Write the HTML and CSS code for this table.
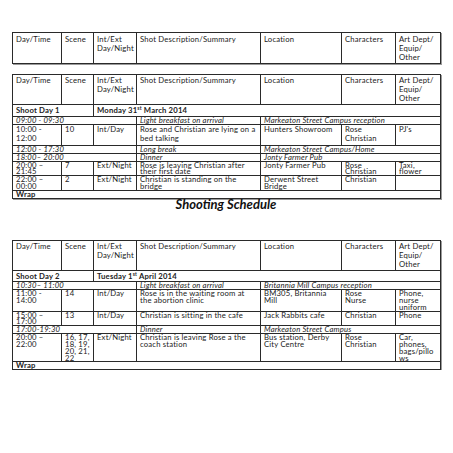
FILE: index.html
```html
<!DOCTYPE html>
<html>
<head>
<meta charset="utf-8">
<link rel="stylesheet" href="styles.css">
</head>
<body>
<div class="page">
  <table class="sched first">
    <colgroup><col class="c1"><col class="c2"><col class="c3"><col class="c4"><col class="c5"><col class="c6"><col class="c7"></colgroup>
    <tr class="head"><td>Day/Time</td><td>Scene</td><td>Int/Ext<br>Day/Night</td><td>Shot Description/Summary</td><td>Location</td><td>Characters</td><td>Art Dept/<br>Equip/<br>Other</td></tr>
  </table>

  <table class="sched second">
    <colgroup><col class="c1"><col class="c2"><col class="c3"><col class="c4"><col class="c5"><col class="c6"><col class="c7"></colgroup>
    <tr class="head"><td>Day/Time</td><td>Scene</td><td>Int/Ext<br>Day/Night</td><td>Shot Description/Summary</td><td>Location</td><td>Characters</td><td>Art Dept/<br>Equip/<br>Other</td></tr>
    <tr class="day"><td colspan="2">Shoot Day 1</td><td colspan="5">Monday 31<sup>st</sup> March 2014</td></tr>
    <tr class="slim it"><td colspan="3">09:00 - 09:30</td><td>Light breakfast on arrival</td><td colspan="3">Markeaton Street Campus reception</td></tr>
    <tr class="tall"><td>10:00 -<br>12:00</td><td>10</td><td>Int/Day</td><td>Rose and Christian are lying on a bed talking</td><td>Hunters Showroom</td><td>Rose<br>Christian</td><td>PJ's</td></tr>
    <tr class="slim it"><td colspan="3">12:00 - 17:30</td><td>Long break</td><td colspan="3">Markeaton Street Campus/Home</td></tr>
    <tr class="slim it"><td colspan="3">18:00– 20:00</td><td>Dinner</td><td colspan="3">Jonty Farmer Pub</td></tr>
    <tr class="two"><td>20:00 –<br>21:45</td><td>7</td><td>Ext/Night</td><td>Rose is leaving Christian after their first date</td><td>Jonty Farmer Pub</td><td>Rose<br>Christian</td><td>Taxi,<br>flower</td></tr>
    <tr class="two"><td>22:00 –<br>00:00</td><td>2</td><td>Ext/Night</td><td>Christian is standing on the bridge</td><td>Derwent Street<br>Bridge</td><td>Christian</td><td></td></tr>
    <tr class="slim b"><td colspan="7">Wrap</td></tr>
  </table>

  <h1 class="title">Shooting Schedule</h1>

  <table class="sched third">
    <colgroup><col class="c1"><col class="c2"><col class="c3"><col class="c4"><col class="c5"><col class="c6"><col class="c7"></colgroup>
    <tr class="head"><td>Day/Time</td><td>Scene</td><td>Int/Ext<br>Day/Night</td><td>Shot Description/Summary</td><td>Location</td><td>Characters</td><td>Art Dept/<br>Equip/<br>Other</td></tr>
    <tr class="day"><td colspan="2">Shoot Day 2</td><td colspan="5">Tuesday 1<sup>st</sup> April 2014</td></tr>
    <tr class="slim it"><td colspan="3">10:30– 11:00</td><td>Light breakfast on arrival</td><td colspan="3">Britannia Mill Campus reception</td></tr>
    <tr class="three"><td>11:00 -<br>14:00</td><td>14</td><td>Int/Day</td><td>Rose is in the waiting room at the abortion clinic</td><td>BM305, Britannia<br>Mill</td><td>Rose<br>Nurse</td><td>Phone,<br>nurse<br>uniform</td></tr>
    <tr class="two"><td>15:00 –<br>17:00</td><td>13</td><td>Int/Day</td><td>Christian is sitting in the cafe</td><td>Jack Rabbits cafe</td><td>Christian</td><td>Phone</td></tr>
    <tr class="slim it"><td colspan="3">17:00-19:30</td><td>Dinner</td><td colspan="3">Markeaton Street Campus</td></tr>
    <tr class="four"><td>20:00 –<br>22:00</td><td>16, 17,<br>18, 19,<br>20, 21,<br>22</td><td>Ext/Night</td><td>Christian is leaving Rose a the coach station</td><td>Bus station, Derby<br>City Centre</td><td>Rose<br>Christian</td><td>Car,<br>phones,<br>bags/pillo<br>ws</td></tr>
    <tr class="slim b"><td colspan="7">Wrap</td></tr>
  </table>
</div>
</body>
</html>
```

FILE: styles.css
```css
html, body {
  margin: 0;
  padding: 0;
  background: #ffffff;
}
.page {
  padding: 32px 0 0 12px;
  font-family: Lato, "Liberation Sans", sans-serif;
  color: #222;
}
.sched {
  width: 428px;
  border-collapse: collapse;
  table-layout: fixed;
  font-size: 7.7px;
  letter-spacing: 0.18px;
  line-height: 6.8px;
  box-shadow: 1px 1px 0 #9a9a9a;
}
.sched td {
  border: 1px solid #2a2a2a;
  padding: 0 3px;
  vertical-align: top;
  white-space: nowrap;
  overflow: hidden;
}
.c1 { width: 49px; }
.c2 { width: 32px; }
.c3 { width: 43px; }
.c4 { width: 124px; }
.c5 { width: 81px; }
.c6 { width: 54px; }
.c7 { width: 45px; }
.first { margin-bottom: 10px; }
.head { height: 30px; line-height: 9px; }
.head td { padding-top: 1px; }
.first .head { height: 31px; }
.first .head td { padding-top: 2px; }
.day { height: 11.5px; font-weight: bold; line-height: 9px; }
.day td { padding-top: 1px; }
.slim { height: 7px; }
.slim td { line-height: 7px; }
.it { font-style: italic; }
.b { font-weight: bold; }
.tall { height: 21px; }
.tall td { line-height: 9px; }
.two { height: 13.6px; }
.two td, .tall td, .three td, .four td { white-space: normal; }
.three { height: 20.4px; }
.four { height: 27.2px; }
sup {
  font-size: 5px;
  line-height: 0;
  vertical-align: 3px;
}
.title {
  margin: 0;
  width: 428px;
  height: 41px;
  text-align: center;
  font-size: 13px;
  font-weight: bold;
  font-style: italic;
  line-height: 11px;
  color: #111;
}
```
